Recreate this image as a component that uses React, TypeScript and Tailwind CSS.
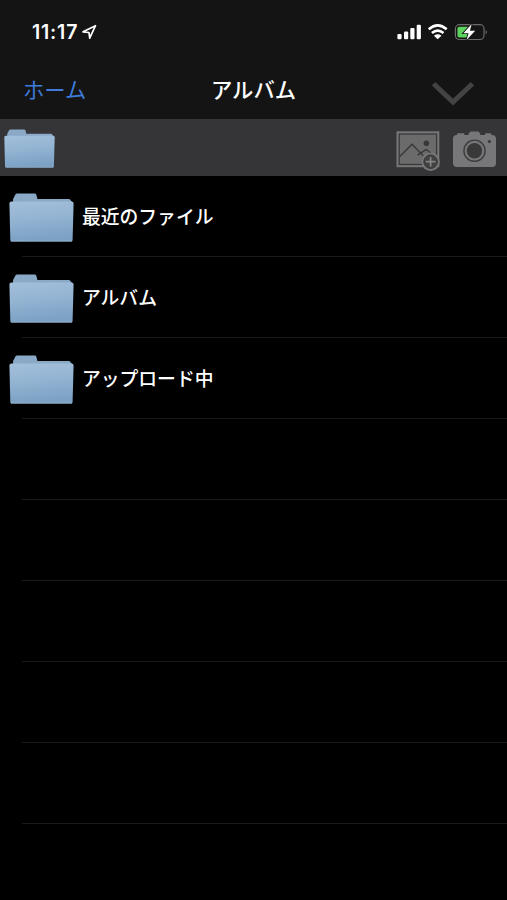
const rows = ["最近のファイル", "アルバム", "アップロード中", "", "", "", "", ""];

function Folder({ className, id }: { className: string; id: string }) {
  return (
    <svg className={className} viewBox="0 0 64 49" preserveAspectRatio="none" aria-hidden="true">
      <defs>
        <linearGradient id={id} x1="0" y1="0" x2="0.15" y2="1">
          <stop offset="0" stopColor="#a3bfda" />
          <stop offset="0.5" stopColor="#92b3d2" />
          <stop offset="1" stopColor="#7ba1c4" />
        </linearGradient>
      </defs>
      <path d="M4 10V6L6.3 1.5Q6.8.5 8 .5H25.3Q26.5.5 26.9 1.7L28 6H59.5L63 10V14H1Z" fill="#8aa9c7" />
      <path d="M.4 10.5Q.3 9 2 8.5H62Q63.7 9 63.6 10.5L62.6 47.2Q62.5 48.5 61.3 48.5H2.6Q1.4 48.5 1.3 47.2Z" fill={`url(#${id})`} />
      <path d="M2 48.1H62" stroke="#a3bed6" strokeWidth=".7" />
    </svg>
  );
}

function StatusIcons() {
  return (
    <svg className="h-6 w-24" viewBox="396 20 96 24" aria-hidden="true">
      <g fill="#fff">
        <rect x="397.4" y="34" width="4.2" height="5.3" rx="1.1" />
        <rect x="404" y="31.5" width="4.2" height="7.8" rx="1.1" />
        <rect x="410.3" y="28" width="4.2" height="11.3" rx="1.1" />
        <rect x="416.7" y="24.7" width="4.2" height="14.6" rx="1.1" />
        <path d="M437.7 39.3L433.9 35.7Q437.7 32.8 441.5 35.7Z" />
      </g>
      <path d="M428.7 29.2Q437.7 21.4 446.7 29.2M431.9 33.1Q437.7 28.3 443.5 33.1" fill="none" stroke="#fff" strokeWidth="2.6" />
      <rect x="455.4" y="24.7" width="28.6" height="14.8" rx="4" fill="none" stroke="#6b6b6b" strokeWidth="1.2" />
      <path d="M485.7 29.7Q488 32 485.7 34.4Z" fill="#777" />
      <rect x="457.4" y="26.8" width="12" height="10.6" rx="2" fill="#5bd35e" />
      <path d="M471.7 24L463.4 33.2H468.6L466.5 40L475.2 30.7H469.9Z" fill="#fff" stroke="#141414" strokeWidth="1.8" paintOrder="stroke" />
    </svg>
  );
}

function PhotoAdd() {
  return (
    <svg className="h-[43px] w-11" viewBox="396 128 44 43" fill="none" aria-hidden="true">
      <rect x="396.5" y="131.3" width="42.8" height="35.9" fill="#777779" />
      <rect x="399.2" y="134" width="37.4" height="30.5" fill="#6b6b6c" stroke="#38383a" strokeWidth="1.3" />
      <path d="M399.8 156.5L412 144.3L423.5 156M417.5 155.2L426.2 149.3L431 153.5" stroke="#38383a" strokeWidth="1.4" />
      <circle cx="426.4" cy="143.2" r="2.8" fill="#38383a" />
      <circle cx="430.6" cy="161.7" r="9.2" fill="#777779" />
      <circle cx="430.6" cy="161.7" r="6.8" fill="#424243" stroke="#38383a" strokeWidth="1" />
      <path d="M425.8 161.7H435.4M430.6 156.9V166.5" stroke="#858587" strokeWidth="1.7" />
    </svg>
  );
}

function Camera() {
  return (
    <svg className="h-[43px] w-11" viewBox="452 128 44 43" fill="none" aria-hidden="true">
      <g fill="#777779">
        <path d="M468.5 135V133.8L470.5 131.5H478.5L480.2 133.8V135Z" />
        <rect x="457" y="133.3" width="7.3" height="3" rx="1" />
        <rect x="485" y="133.3" width="6.3" height="3" rx="1" />
        <rect x="453" y="135" width="43" height="32" rx="4" />
      </g>
      <circle cx="474.5" cy="150.7" r="10.6" stroke="#3b3b3c" strokeWidth="1.4" />
      <circle cx="474.5" cy="150.7" r="7.7" fill="#39393a" />
      <circle cx="489.4" cy="141.5" r="1.6" fill="#38383a" />
    </svg>
  );
}

export default function App() {
  return (
    <main className="flex h-[900px] w-[507px] flex-col overflow-hidden bg-black font-['Noto_Sans_CJK_JP',sans-serif] text-white">
      <header className="flex h-[119px] flex-col bg-[#141414] pt-5">
        <div className="flex h-6 justify-between pr-[15px] pl-8">
          <div className="flex items-center gap-1">
            <time className="w-[46px] font-['Inter',sans-serif] text-[19.5px] leading-6 font-semibold tracking-[0.8px] whitespace-nowrap">11:17</time>
            <svg className="h-4 w-4" viewBox="0 0 16 16" fill="none" aria-hidden="true">
              <path d="M1 7.8L13.5 1.7L7.7 14.2L7 8.5Z" stroke="#fff" strokeWidth="1.7" strokeLinejoin="round" />
            </svg>
          </div>
          <StatusIcons />
        </div>
        <nav className="mt-6 grid h-11 grid-cols-[1fr_auto_1fr] items-center px-[23px]">
          <a className="pb-0.5 text-[21.3px] leading-none text-[#3e7bdb]">ホーム</a>
          <h1 className="pb-0.5 text-[21.3px] leading-none font-medium">アルバム</h1>
          <svg className="mr-[9px] h-8 w-[44px] justify-self-end" viewBox="431 74 44 32" fill="none" aria-hidden="true">
            <path d="M433.6 83.7L453 102L472.4 83.7" stroke="#434343" strokeWidth="5" />
          </svg>
        </nav>
      </header>
      <section className="flex h-[57px] items-center justify-between bg-[#353537] pr-[11px] pl-1">
        <Folder className="mt-px h-[39px] w-[51px]" id="folder-toolbar" />
        <div className="flex items-center gap-3 pt-1">
          <PhotoAdd />
          <Camera />
        </div>
      </section>
      <ul className="flex flex-col">
        {rows.map((name, index) => (
          <li className="flex h-[81px] flex-col" key={index}>
            <div className="flex h-20 items-center pl-[9px]">
              {name && (
                <>
                  <Folder className="mt-0.5 h-[49px] w-[65px]" id={`folder-${index}`} />
                  <span className="ml-2 pt-px text-[18.8px] leading-none font-medium">{name}</span>
                </>
              )}
            </div>
            <div className="ml-[22px] h-px bg-[#191919]" />
          </li>
        ))}
      </ul>
    </main>
  );
}
